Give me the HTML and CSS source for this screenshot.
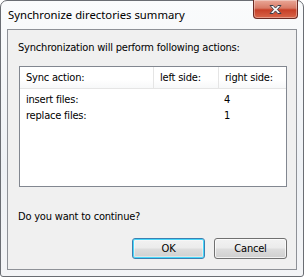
FILE: index.html
```html
<!DOCTYPE html>
<html lang="en">
<head>
    <meta charset="UTF-8">
    <meta name="viewport" content="width=device-width, initial-scale=1.0">
    <title>Synchronize directories summary</title>
    <link rel="stylesheet" href="styles.css">
</head>
<body>
    <div class="window">
        <!-- title bar -->
        <div class="titlebar">
            <span class="title">Synchronize directories summary</span>
            <button class="close" title="Close">
                <svg width="17" height="11" viewBox="0 0 17 11">
                    <path d="M3 1.5h3.2l2.3 2.6 2.3-2.6H14L10.4 5.5 14 9.5h-3.2L8.5 6.9 6.2 9.5H3l3.6-4z" fill="#fff" stroke="#3a3f4a" stroke-width="1" stroke-linejoin="round"/>
                </svg>
            </button>
        </div>

        <div class="client">
            <p class="intro">Synchronization will perform following actions:</p>

            <div class="list">
                <div class="row header">
                    <span class="col col-action">Sync action:</span>
                    <span class="col col-left">left side:</span>
                    <span class="col col-right">right side:</span>
                </div>
                <div class="row">
                    <span class="col col-action">insert files:</span>
                    <span class="col col-left"></span>
                    <span class="col col-right">4</span>
                </div>
                <div class="row">
                    <span class="col col-action">replace files:</span>
                    <span class="col col-left"></span>
                    <span class="col col-right">1</span>
                </div>
            </div>

            <p class="question">Do you want to continue?</p>

            <div class="buttons">
                <button class="btn btn-default">OK</button>
                <button class="btn">Cancel</button>
            </div>
        </div>
    </div>
</body>
</html>
```

FILE: styles.css
```css
/* general */
body {
    margin: 0;
    background: #fff;
    font-family: "DejaVu Sans Condensed", "DejaVu Sans", sans-serif;
    font-size: 11px;
    letter-spacing: -0.2px;
    color: #000;
}
.window {
    box-sizing: border-box;
    width: 304px;
    height: 277px;
    border: 1px solid #6a6d73;
    border-radius: 7px 7px 3px 3px;
    background: linear-gradient(#fafbfc, #eef1f5 60%, #f3f4f6);
    padding: 0 6px 6px 6px;
    display: flex;
    flex-direction: column;
}

/* title bar */
.titlebar {
    height: 28px;
    display: flex;
    justify-content: space-between;
    align-items: flex-start;
    flex-shrink: 0;
}
.title {
    font-family: "Noto Sans", sans-serif;
    font-size: 11.3px;
    letter-spacing: 0;
    padding: 6px 0 0 1px;
    color: #000;
}
.close {
    width: 45px;
    height: 19px;
    margin: -1px -1px 0 0;
    padding: 0;
    border: 1px solid #6b2b24;
    border-top: none;
    border-radius: 0 0 4px 4px;
    background: linear-gradient(#eaa898, #d87a66 45%, #c73f27 55%, #d8664a);
    box-shadow: inset 0 0 0 1px rgba(255, 255, 255, 0.35);
    display: flex;
    align-items: center;
    justify-content: center;
}

/* client area */
.client {
    flex: 1;
    background: #f0f0f0;
    border: 1px solid #8e9197;
    padding: 0 9px 0 10px;
    display: flex;
    flex-direction: column;
}
.intro {
    margin: 11px 0 0 0;
    line-height: 13px;
}
.list {
    margin: 12px 0 0 1px;
    height: 119px;
    background: #fff;
    border: 1px solid #828790;
}
.row {
    display: flex;
    height: 16px;
    line-height: 16px;
}
.row.header {
    height: 21px;
    line-height: 21px;
    border-bottom: 1px solid #e5e5e5;
    background: linear-gradient(#fff 60%, #f7f8f9);
    margin-bottom: 3px;
}
.col {
    box-sizing: border-box;
    padding-left: 6px;
    white-space: nowrap;
}
.col-action { width: 133px; }
.col-left { width: 65px; }
.col-right { width: 67px; }
.header .col-left,
.header .col-right {
    border-left: 1px solid #e5e5e5;
}
.question {
    margin: 23px 0 0 0;
    line-height: 13px;
}

/* buttons */
.buttons {
    display: flex;
    justify-content: flex-end;
    gap: 9px;
    margin-top: 15px;
}
.btn {
    width: 73px;
    height: 21px;
    padding: 0;
    font-family: inherit;
    font-size: 11px;
    letter-spacing: -0.2px;
    color: #000;
    border: 1px solid #707070;
    border-radius: 3px;
    background: linear-gradient(#f2f2f2, #ebebeb 48%, #dddddd 52%, #cfcfcf);
    box-shadow: inset 0 0 0 1px rgba(255, 255, 255, 0.7);
}
.btn-default {
    border-color: #3c7fb1;
    box-shadow: inset 0 0 0 1px #48d8fb, inset 0 0 0 2px rgba(255, 255, 255, 0.4);
}
```
